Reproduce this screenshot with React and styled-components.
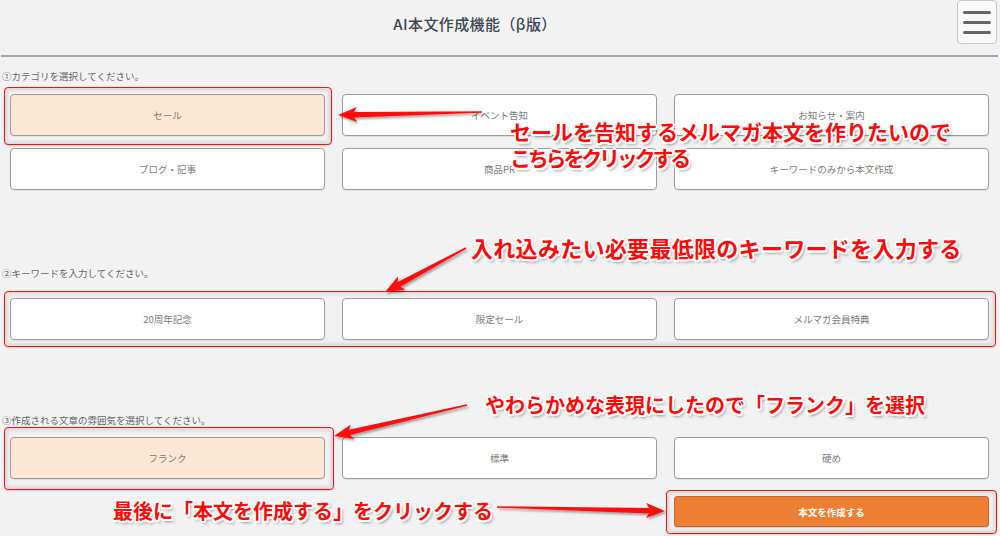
import React from 'react';
import styled, { createGlobalStyle } from 'styled-components';

const Global = createGlobalStyle`
  html, body { margin: 0; padding: 0; background: #f2f2f2; }
  body { font-family: "Noto Sans CJK JP", "Noto Sans", sans-serif; }
  * { box-sizing: border-box; }
`;

const Page = styled.div`
  position: relative;
  width: 1000px;
  height: 536px;
  overflow: hidden;
  background: #f2f2f2;
`;

const Header = styled.header`
  display: flex;
  align-items: flex-start;
  height: 57px;
  margin: 0 2px 0 1px;
  border-bottom: 2px solid #a5abb5;
`;

const Title = styled.h1`
  flex: 1;
  margin: 0;
  padding-right: 8px;
  text-align: center;
  font-size: 15px;
  line-height: 48px;
  font-weight: 500;
  color: #3a4556;
  letter-spacing: 0.4px;
`;

const MenuButton = styled.button`
  width: 40px;
  height: 44px;
  margin-right: 1px;
  padding: 0;
  border: 1px solid #c9c9c9;
  border-radius: 4px;
  background: #f9f9f9;
  display: flex;
  flex-direction: column;
  align-items: center;
  justify-content: center;
  gap: 7px;
`;

const MenuBar = styled.span`
  display: block;
  width: 28px;
  height: 3px;
  border-radius: 2px;
  background: #666;
`;

const Main = styled.main`
  display: flex;
  flex-direction: column;
`;

const Label = styled.p`
  margin: ${p => p.$top}px 0 0 2px;
  font-size: 9.5px;
  line-height: 14px;
  color: #666;
`;

const Grid = styled.div`
  display: grid;
  grid-template-columns: repeat(3, 315px);
  column-gap: 17px;
  row-gap: 12px;
  padding: 0 10px;
  margin-top: ${p => p.$top}px;
`;

const Choice = styled.div`
  height: 42px;
  display: flex;
  align-items: center;
  justify-content: center;
  border: 1px solid #9c9c9c;
  border-radius: 4px;
  background: ${p => (p.$active ? '#fde6d2' : '#ffffff')};
  color: #7a7a7a;
  font-size: 9.5px;
  box-shadow: 0 1px 1px rgba(0, 0, 0, 0.08);
`;

const Submit = styled.button`
  grid-column: 3;
  height: 31px;
  border: 1px solid #c9682a;
  border-radius: 3px;
  background: #ec7f34;
  color: #fff;
  font-family: inherit;
  font-size: 9.5px;
  font-weight: 700;
  box-shadow: 0 1px 1px rgba(0, 0, 0, 0.15);
`;

/* ---------- annotation overlay ---------- */

const Overlay = styled.div`
  position: absolute;
  inset: 0;
  pointer-events: none;
`;

const Highlight = styled.div`
  position: absolute;
  left: ${p => p.$x}px;
  top: ${p => p.$y}px;
  width: ${p => p.$w}px;
  height: ${p => p.$h}px;
  border: 1.5px solid #f21010;
  border-radius: 4px;
  box-shadow: inset 0 0 3px 3px rgba(0, 0, 0, 0.09), 0 1px 2px rgba(0, 0, 0, 0.15);
`;

const ArrowLayer = styled.svg`
  position: absolute;
  left: 0;
  top: 0;
  width: 1000px;
  height: 536px;
`;

const Note = styled.div`
  position: absolute;
  left: ${p => p.$x}px;
  top: ${p => p.$y}px;
  font-size: ${p => p.$size}px;
  letter-spacing: ${p => p.$ls || 0}px;
  line-height: 26px;
  font-weight: 700;
  color: #ff0a0a;
  white-space: nowrap;
  text-shadow:
    -1.5px -1.5px 0 #fff, 1.5px -1.5px 0 #fff, -1.5px 1.5px 0 #fff, 1.5px 1.5px 0 #fff,
    0 -1.6px 0 #fff, 0 1.6px 0 #fff, -1.6px 0 0 #fff, 1.6px 0 0 #fff,
    2px 3px 3px rgba(0, 0, 0, 0.4);
`;

const NoteLine = styled.span`
  display: block;
  letter-spacing: ${p => p.$ls || 0}px;
`;

function arrowPoints([tx, ty], [hx, hy], { tail = 1.5, shaft = 5.5, headLen = 19, headW = 15, barb = 3 } = {}) {
  const len = Math.hypot(hx - tx, hy - ty);
  const dx = (hx - tx) / len;
  const dy = (hy - ty) / len;
  const nx = -dy;
  const ny = dx;
  const pt = (x, y) => `${x.toFixed(1)},${y.toFixed(1)}`;
  const wx = hx - dx * headLen;
  const wy = hy - dy * headLen;
  const kx = hx - dx * (headLen - barb);
  const ky = hy - dy * (headLen - barb);
  return [
    pt(tx + (nx * tail) / 2, ty + (ny * tail) / 2),
    pt(kx + (nx * shaft) / 2, ky + (ny * shaft) / 2),
    pt(wx + (nx * headW) / 2, wy + (ny * headW) / 2),
    pt(hx, hy),
    pt(wx - (nx * headW) / 2, wy - (ny * headW) / 2),
    pt(kx - (nx * shaft) / 2, ky - (ny * shaft) / 2),
    pt(tx - (nx * tail) / 2, ty - (ny * tail) / 2),
  ].join(' ');
}

const arrows = [
  { from: [482, 112], to: [338, 115] },
  { from: [466, 248], to: [385, 292] },
  { from: [467, 405], to: [334, 436] },
  { from: [497, 507], to: [665, 511] },
];

const categories = ['セール', 'イベント告知', 'お知らせ・案内', 'ブログ・記事', '商品PR', 'キーワードのみから本文作成'];
const keywords = ['20周年記念', '限定セール', 'メルマガ会員特典'];
const tones = ['フランク', '標準', '硬め'];

export default function App() {
  return (
    <Page>
      <Global />
      <Header>
        <Title>AI本文作成機能（β版）</Title>
        <MenuButton aria-label="menu">
          <MenuBar />
          <MenuBar />
          <MenuBar />
        </MenuButton>
      </Header>
      <Main>
        <Label $top={12}>①カテゴリを選択してください。</Label>
        <Grid $top={11}>
          {categories.map((c, i) => (
            <Choice key={c} $active={i === 0}>{c}</Choice>
          ))}
        </Grid>
        <Label $top={76}>②キーワードを入力してください。</Label>
        <Grid $top={18}>
          {keywords.map(k => (
            <Choice key={k}>{k}</Choice>
          ))}
        </Grid>
        <Label $top={73}>③作成される文章の雰囲気を選択してください。</Label>
        <Grid $top={10}>
          {tones.map((t, i) => (
            <Choice key={t} $active={i === 0}>{t}</Choice>
          ))}
        </Grid>
        <Grid $top={17}>
          <Submit>本文を作成する</Submit>
        </Grid>
      </Main>

      <Overlay>
        <Highlight $x={4} $y={87} $w={328} $h={58} />
        <Highlight $x={4} $y={291} $w={992} $h={56} />
        <Highlight $x={4} $y={427} $w={330} $h={63} />
        <Highlight $x={666} $y={490} $w={331} $h={44} />
        <ArrowLayer viewBox="0 0 1000 536">
          <defs>
            <filter id="arrowShadow" x="-20%" y="-50%" width="140%" height="200%">
              <feDropShadow dx="1.5" dy="2" stdDeviation="1.2" floodColor="#000" floodOpacity="0.35" />
            </filter>
          </defs>
          {arrows.map((a, i) => (
            <polygon key={i} points={arrowPoints(a.from, a.to)} fill="#ff0d0d" filter="url(#arrowShadow)" />
          ))}
        </ArrowLayer>
        <Note $x={510} $y={118} $size={21}>
          <NoteLine>セールを告知するメルマガ本文を作りたいので</NoteLine>
          <NoteLine $ls={-3.2}>こちらをクリックする</NoteLine>
        </Note>
        <Note $x={471} $y={234} $size={22} $ls={0.3}>入れ込みたい必要最低限のキーワードを入力する</Note>
        <Note $x={485} $y={392} $size={20}>やわらかめな表現にしたので「フランク」を選択</Note>
        <Note $x={113} $y={498} $size={20}>最後に「本文を作成する」をクリックする</Note>
      </Overlay>
    </Page>
  );
}
